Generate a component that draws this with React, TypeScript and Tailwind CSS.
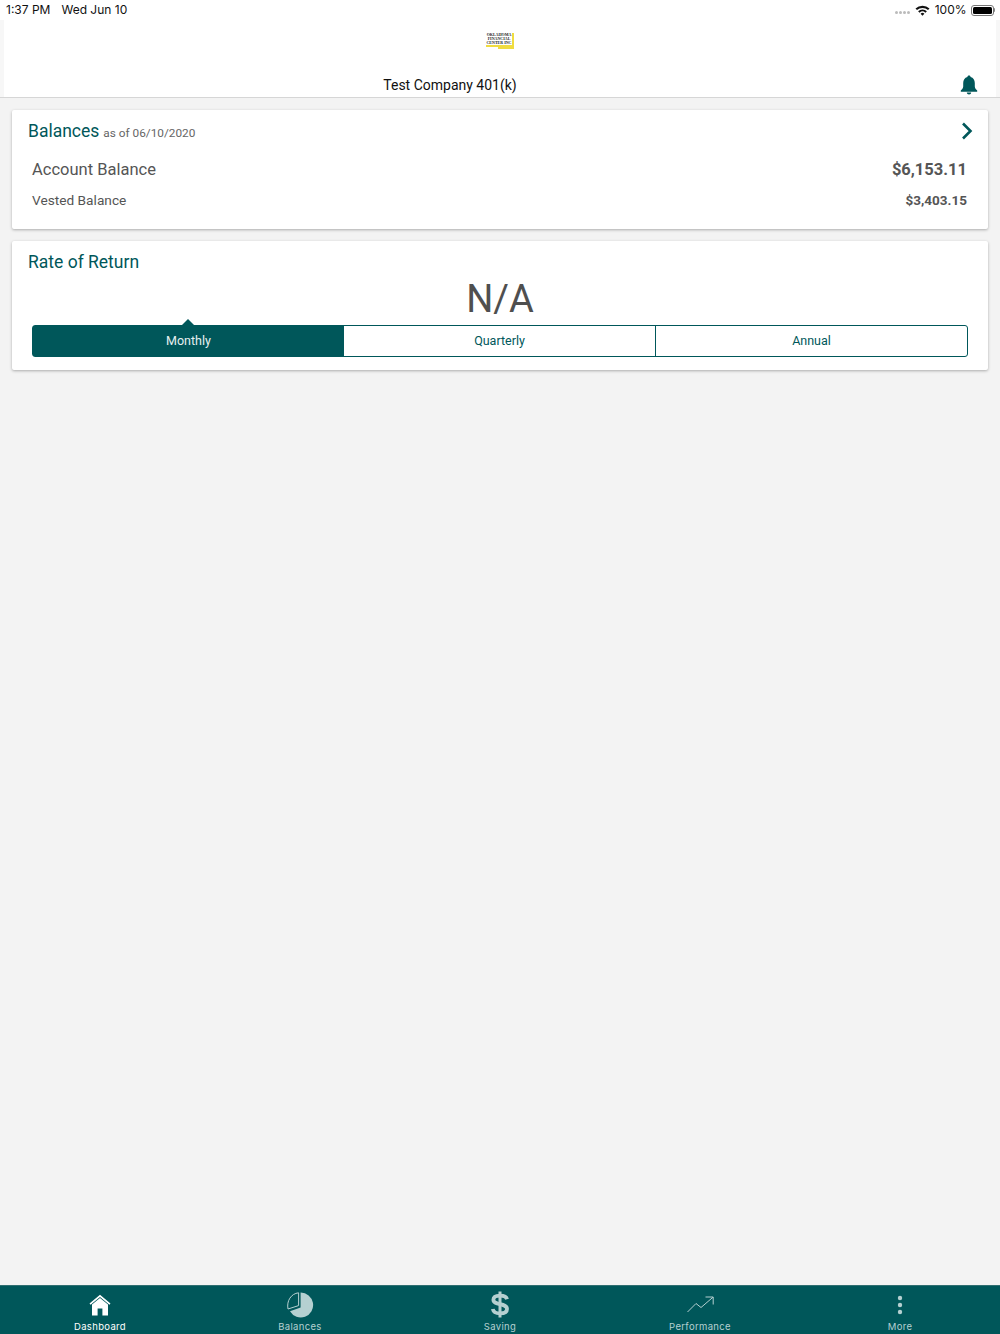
import React from 'react';

const teal = '#00575a';

function StatusBar() {
  return (
    <div className="h-5 bg-white flex items-center justify-between pl-[6px] pr-[5px] text-[12px] text-[#111] font-['Inter',sans-serif]">
      <div className="flex gap-[11px]">
        <span>1:37 PM</span>
        <span>Wed Jun 10</span>
      </div>
      <div className="flex items-center">
        <div className="flex gap-[1px] mr-[5px] mt-1">
          <i className="w-[3px] h-[3px] rounded-full bg-[#bbb]" />
          <i className="w-[3px] h-[3px] rounded-full bg-[#bbb]" />
          <i className="w-[3px] h-[3px] rounded-full bg-[#bbb]" />
          <i className="w-[3px] h-[3px] rounded-full bg-[#bbb]" />
        </div>
        <svg width="15" height="11" viewBox="0 0 15 11" className="mr-[5px]">
          <path d="M0.5 3.6A10 10 0 0 1 14.5 3.6L13 5.1A8 8 0 0 0 2 5.1Z" fill="#111" />
          <path d="M3.1 6.2A6.4 6.4 0 0 1 11.9 6.2L10.4 7.7A4.2 4.2 0 0 0 4.6 7.7Z" fill="#111" />
          <path d="M5.6 8.7A2.8 2.8 0 0 1 9.4 8.7L7.5 10.8Z" fill="#111" />
        </svg>
        <span className="mr-[4px]">100%</span>
        <div className="w-[23px] h-[11px] border border-[#777] rounded-[3px] p-[1px]">
          <div className="w-full h-full bg-black rounded-[1.5px]" />
        </div>
        <div className="w-[1.5px] h-1 bg-[#888] rounded-r-sm" />
      </div>
    </div>
  );
}

function Logo() {
  return (
    <div className="relative w-[28px] h-[18px] font-['Liberation_Serif',serif] font-bold text-[4px] leading-[4.2px] text-[#222] text-center">
      <div className="absolute right-0 top-[1px] w-[2px] h-[15px] bg-[#f0dc40]" />
      <div className="absolute left-0 top-[13px] w-full h-[2px] bg-[#f0dc40]" />
      <div className="absolute right-0 top-[15px] w-[16px] h-[1.5px] bg-[#f0dc40]" />
      <div className="pr-[2px] pt-[1px] whitespace-nowrap">
        <div>OKLAHOMA</div>
        <div>FINANCIAL</div>
        <div>CENTER INC</div>
      </div>
    </div>
  );
}

function Header() {
  return (
    <div className="bg-[#f7f7f7] px-1">
      <div className="relative h-[77px] bg-white flex flex-col items-center pt-[12px]">
        <Logo />
        <div className="mt-[25px] mr-[100px] text-[14px] leading-[20px] text-[#111] font-['Roboto',sans-serif]">Test Company 401(k)</div>
        <svg width="18" height="20" viewBox="0 0 18 20" className="absolute right-[18px] top-[55px]">
          <path d="M9 0.5C8 0.5 7.4 1.2 7.4 2.1C4.6 2.9 3.2 5.2 3.2 8V11.5C3.2 13.4 1.6 14.6 0.8 15.6V16.8H17.2V15.6C16.4 14.6 14.8 13.4 14.8 11.5V8C14.8 5.2 13.4 2.9 10.6 2.1C10.6 1.2 10 0.5 9 0.5Z" fill={teal} />
          <path d="M6.8 17.6H11.2C11.2 18.9 10.2 19.6 9 19.6C7.8 19.6 6.8 18.9 6.8 17.6Z" fill={teal} />
        </svg>
      </div>
    </div>
  );
}

function BalancesCard() {
  return (
    <div className="bg-white rounded-[2px] shadow-[0_1px_3px_rgba(0,0,0,0.3)] h-[119px] pl-4 pr-[21px] pt-[9px]">
      <div className="flex items-center justify-between h-6">
        <div className="flex items-baseline">
          <span className="text-[17.5px] text-[#00575a]">Balances</span>
          <span className="ml-1 text-[11.8px] text-[#666]">as of 06/10/2020</span>
        </div>
        <svg width="12" height="18" viewBox="0 0 12 18" className="-mr-[6px]">
          <path d="M2 1.5L9.5 9L2 16.5" fill="none" stroke={teal} strokeWidth="2.6" />
        </svg>
      </div>
      <div className="flex items-center justify-between pl-1 mt-[15px] h-[24px] text-[#555]">
        <span className="text-[16.5px]">Account Balance</span>
        <span className="text-[16.5px] font-bold">$6,153.11</span>
      </div>
      <div className="flex items-center justify-between pl-1 mt-[6px] h-[24px] text-[#555]">
        <span className="text-[13.7px]">Vested Balance</span>
        <span className="text-[13.5px] font-bold">$3,403.15</span>
      </div>
    </div>
  );
}

function ReturnCard() {
  return (
    <div className="bg-white rounded-[2px] shadow-[0_1px_3px_rgba(0,0,0,0.3)] h-[129px] px-4 pt-[9px]">
      <div className="h-6 flex items-center text-[17.5px] text-[#00575a]">Rate of Return</div>
      <div className="text-center text-[38px] leading-[46px] text-[#4f4f4f] mt-[2px]">N/A</div>
      <div className="mx-1 mt-[3px] h-8 flex border border-[#00575a] rounded-[3px] text-[12.5px] text-[#00575a] relative">
        <div className="absolute left-[148px] -top-[7px] w-0 h-0 border-x-[7px] border-x-transparent border-b-[7px] border-b-[#00575a]" />
        <div className="flex-1 bg-[#00575a] text-[#e6f0f0] flex items-center justify-center">Monthly</div>
        <div className="flex-1 flex items-center justify-center">Quarterly</div>
        <div className="flex-1 border-l border-[#00575a] flex items-center justify-center">Annual</div>
      </div>
    </div>
  );
}

function TabItem({ label, active, children }: any) {
  return (
    <div className={active ? 'w-[200px] flex flex-col items-center text-white' : 'w-[200px] flex flex-col items-center text-[#b5d0d1]'}>
      <div className="h-[27px] mt-[5px] flex items-center justify-center">{children}</div>
      <div className="text-[9.5px] leading-[12px] tracking-[0.33px] mt-[3px] font-['Inter',sans-serif]">{label}</div>
    </div>
  );
}

function TabBar() {
  return (
    <div className="h-[49px] bg-[#00575a] border-t border-[#2f6e70] flex">
      <TabItem label="Dashboard" active>
        <svg width="22" height="22" viewBox="0 0 22 22">
          <path d="M0.5 9.6L11 0.8L21.5 9.6L20.4 10.8L11 3L1.6 10.8Z" fill="#fff" />
          <path d="M3 10.6L11 4L19 10.6V21.5H13.4V14.5H8.6V21.5H3Z" fill="#fff" />
        </svg>
      </TabItem>
      <TabItem label="Balances">
        <svg width="27" height="26" viewBox="0 0 27 26">
          <path d="M11.6 0.8V13.6L1 17C-0.6 9 4 1.6 11.6 0.8Z" fill="none" stroke="#b5d0d1" strokeWidth="1" />
          <path d="M13.6 0.6A12.4 12.4 0 1 1 3 19.2L13.6 15.6Z" fill="#b5d0d1" />
        </svg>
      </TabItem>
      <TabItem label="Saving">
        <svg width="20" height="27" viewBox="0 0 20 27">
          <path d="M17 8.2C16.4 5.6 13.8 4.6 10 4.6C6 4.6 3.4 6 3.4 8.8C3.4 14.6 17 11.8 17 18C17 21 14 22.4 10 22.4C6 22.4 3.4 21 2.8 18" fill="none" stroke="#b5d0d1" strokeWidth="3.8" />
          <path d="M10 0.5V26.5" stroke="#b5d0d1" strokeWidth="3" />
        </svg>
      </TabItem>
      <TabItem label="Performance">
        <svg width="27" height="17" viewBox="0 0 27 17">
          <path d="M0.5 16L9 7.5L14 11.5L26 1.2M18.5 1H26.2V8.5" fill="none" stroke="#b5d0d1" strokeWidth="1" />
        </svg>
      </TabItem>
      <TabItem label="More">
        <svg width="6" height="20" viewBox="0 0 6 20">
          <circle cx="3" cy="3" r="2.2" fill="#b5d0d1" />
          <circle cx="3" cy="10" r="2.2" fill="#b5d0d1" />
          <circle cx="3" cy="17" r="2.2" fill="#b5d0d1" />
        </svg>
      </TabItem>
    </div>
  );
}

export default function App() {
  return (
    <div className="w-[1000px] h-[1334px] flex flex-col bg-[#f3f3f3] font-['Roboto',sans-serif]">
      <StatusBar />
      <Header />
      <div className="h-px bg-[#d6d6d6]" />
      <div className="flex-1 px-3 pt-3 flex flex-col gap-3">
        <BalancesCard />
        <ReturnCard />
      </div>
      <TabBar />
    </div>
  );
}
